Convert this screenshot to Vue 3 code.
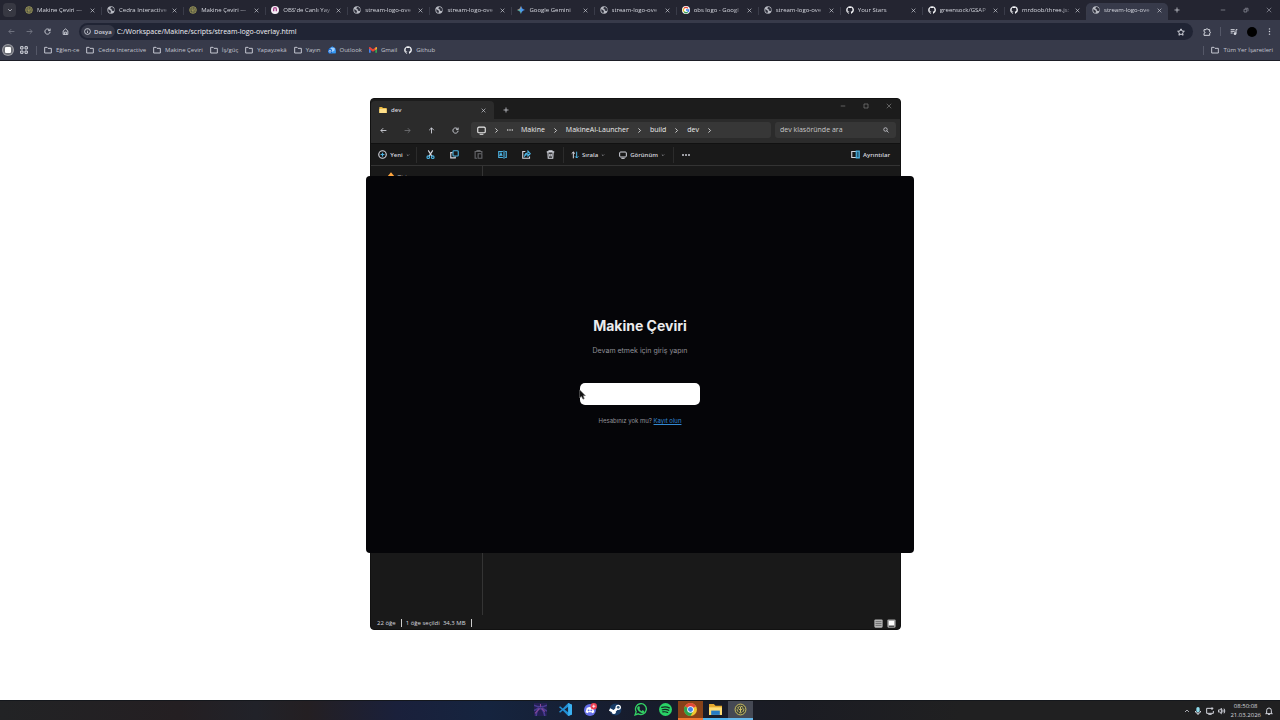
<script setup>
import { ref } from 'vue'

const url = ref('C:/Workspace/Makine/scripts/stream-logo-overlay.html')
const query = ref('')

const tabs = [
  { icon: 'makine', title: 'Makine Çeviri —' },
  { icon: 'globe', title: 'Cedra Interactive' },
  { icon: 'makine', title: 'Makine Çeviri —' },
  { icon: 'obs', title: "OBS'de Canlı Yay" },
  { icon: 'globe', title: 'stream-logo-ove' },
  { icon: 'globe', title: 'stream-logo-ove' },
  { icon: 'gemini', title: 'Google Gemini' },
  { icon: 'globe', title: 'stream-logo-ove' },
  { icon: 'google', title: 'obs logo - Googl' },
  { icon: 'globe', title: 'stream-logo-ove' },
  { icon: 'github', title: 'Your Stars' },
  { icon: 'github', title: 'greensock/GSAP' },
  { icon: 'github', title: 'mrdoob/three.js:' },
  { icon: 'globe', title: 'stream-logo-ove', active: true },
]

const bookmarks = [
  { icon: 'folder', title: 'Eğlen-ce' },
  { icon: 'folder', title: 'Cedra Interactive' },
  { icon: 'folder', title: 'Makine Çeviri' },
  { icon: 'folder', title: 'İş/güç' },
  { icon: 'folder', title: 'Yapayzekâ' },
  { icon: 'folder', title: 'Yayın' },
  { icon: 'outlook', title: 'Outlook' },
  { icon: 'gmail', title: 'Gmail' },
  { icon: 'github', title: 'Github' },
]

const crumbs = ['Makine', 'MakineAI-Launcher', 'build', 'dev']

const fileActions = [
  { icon: 'cut', label: 'Kes' },
  { icon: 'copy', label: 'Kopyala' },
  { icon: 'paste', label: 'Yapıştır', dim: true },
  { icon: 'rename', label: 'Yeniden adlandır' },
  { icon: 'share', label: 'Paylaş' },
  { icon: 'trash', label: 'Sil' },
]

const apps = [
  { icon: 'game', label: 'Oyun' },
  { icon: 'vscode', label: 'Visual Studio Code' },
  { icon: 'discord', label: 'Discord' },
  { icon: 'steam', label: 'Steam' },
  { icon: 'whatsapp', label: 'WhatsApp' },
  { icon: 'spotify', label: 'Spotify' },
  { icon: 'chrome', label: 'Chrome', state: 'alert' },
  { icon: 'explorer', label: 'Dosya Gezgini', state: 'open' },
  { icon: 'makine', label: 'Makine Çeviri', state: 'focused' },
]
</script>

<template>
  <div class="screen">
    <svg class="sprite" aria-hidden="true">
      <symbol id="chevron-down" viewBox="0 0 24 24"><path class="line" d="M5 9l7 7 7-7" /></symbol>
      <symbol id="chevron-up" viewBox="0 0 24 24"><path class="line" d="M4 16l8-8 8 8" /></symbol>
      <symbol id="chevron-right" viewBox="0 0 24 24"><path class="line bold" d="M7 2l10 10L7 22" /></symbol>
      <symbol id="close" viewBox="0 0 24 24"><path class="line" d="M3 3l18 18M21 3L3 21" /></symbol>
      <symbol id="plus" viewBox="0 0 24 24"><path class="line" d="M12 2v20M2 12h20" /></symbol>
      <symbol id="minus" viewBox="0 0 24 24"><path class="line" d="M3 12h18" /></symbol>
      <symbol id="maximize" viewBox="0 0 24 24"><path class="line" d="M4 4h16v16H4z" /></symbol>
      <symbol id="restore" viewBox="0 0 24 24"><path class="line" d="M4 9h11v11H4zM8 5h12v12" /></symbol>
      <symbol id="back" viewBox="0 0 24 24"><path class="line" d="M22 12H3M11 4l-8 8 8 8" /></symbol>
      <symbol id="forward" viewBox="0 0 24 24"><path class="line" d="M2 12h19M13 4l8 8-8 8" /></symbol>
      <symbol id="up" viewBox="0 0 24 24"><path class="line" d="M12 22V3M4 11l8-8 8 8" /></symbol>
      <symbol id="reload" viewBox="0 0 24 24"><path class="line" d="M20 8a9 9 0 1 0 1 5M21 2v7h-7" /></symbol>
      <symbol id="home" viewBox="0 0 24 24"><path class="line" d="M4 10l8-7 8 7v12H4zM9 22v-8h6v8" /></symbol>
      <symbol id="info" viewBox="0 0 24 24"><circle class="line" cx="12" cy="12" r="10" /><path class="line" d="M12 11v6M12 6v2" /></symbol>
      <symbol id="star" viewBox="0 0 24 24"><path class="line" d="M12 2.500l3 6.500 7 .8-5.200 4.800 1.400 7L12 18l-6.200 3.600 1.400-7L2 9.800 9 9z" /></symbol>
      <symbol id="puzzle" viewBox="0 0 24 24"><path class="line" d="M3 5h6c0-4 6-4 6 0h5v6c3 0 3 5 0 5v6H3v-6c4 0 4-5 0-5z" /></symbol>
      <symbol id="media" viewBox="0 0 24 24"><path class="line" d="M2 5h12M2 10h12M2 15h6M18 17V5h4" /><circle cx="15" cy="17" r="4" fill="currentColor" /></symbol>
      <symbol id="dots" viewBox="0 0 24 24"><g fill="currentColor"><circle cx="12" cy="3" r="2.500" /><circle cx="12" cy="12" r="2.500" /><circle cx="12" cy="21" r="2.500" /></g></symbol>
      <symbol id="more" viewBox="0 0 24 24"><g fill="currentColor"><circle cx="3" cy="12" r="2.800" /><circle cx="12" cy="12" r="2.800" /><circle cx="21" cy="12" r="2.800" /></g></symbol>
      <symbol id="folder" viewBox="0 0 24 24"><path class="line" d="M2 4h7l3 3h10v14H2z" /></symbol>
      <symbol id="grid" viewBox="0 0 24 24"><path class="line" d="M2 2h7v7H2zM15 2h7v7h-7zM2 15h7v7H2zM15 15h7v7h-7z" /></symbol>
      <symbol id="profile" viewBox="0 0 24 24"><circle cx="12" cy="12" r="12" fill="#9b9ca3" /><circle cx="12" cy="12" r="10" fill="#6c6e76" /><rect x="6" y="6" width="12" height="12" rx="2" fill="#fff" /></symbol>
      <symbol id="search" viewBox="0 0 24 24"><circle class="line" cx="10" cy="10" r="7" /><path class="line" d="M15 15l7 7" /></symbol>
      <symbol id="monitor" viewBox="0 0 24 24"><rect class="line" x="2" y="3" width="20" height="15" rx="3" /><path class="line" d="M7 22h10" /></symbol>
      <symbol id="globe" viewBox="0 0 24 24"><circle cx="12" cy="12" r="11" fill="#b9bbc3" /><path d="M3 10l6 2 3 4-2 6-5-4zM12 3l-2 5 4 2 1 4 6 1 1-6-5-5z" fill="#30323e" /></symbol>
      <symbol id="makine" viewBox="0 0 24 24"><circle cx="12" cy="12" r="11" fill="#41463c" /><g fill="none" stroke="#cfc168" stroke-width="1.800"><circle cx="12" cy="12" r="10" /><circle cx="12" cy="12" r="6" stroke-dasharray="5 2" /><path d="M12 7v10M8 10l4 4 4-4" /></g></symbol>
      <symbol id="obs" viewBox="0 0 24 24"><circle cx="12" cy="12" r="12" fill="#f4eef5" /><path d="M6 16V9a6 6 0 0 1 12 0v7h-4V9a2 2 0 0 0-4 0v7z" fill="#a9428c" /></symbol>
      <symbol id="gemini" viewBox="0 0 24 24"><path d="M12 0q2 10 12 12-10 2-12 12Q10 14 0 12 10 10 12 0z" fill="#4c8ee8" /><path d="M12 0q2 10 12 12H12z" fill="#4c8ee8" /><path d="M0 12h12v12Q10 14 0 12z" fill="#67bd74" /><path d="M0 12q10-2 12-12v12z" fill="#dba05a" /><circle cx="12" cy="12" r="5" fill="#4c9ee8" /></symbol>
      <symbol id="google" viewBox="0 0 24 24"><circle cx="12" cy="12" r="12" fill="#fff" /><g fill="none" stroke-width="4"><path d="M6 7a8 8 0 0 1 12 0" stroke="#e5483c" /><path d="M6 7a8 8 0 0 0 0 10" stroke="#efb72c" /><path d="M6 17a8 8 0 0 0 11 1" stroke="#38a157" /><path d="M12 12h8q0 4-3 6" stroke="#4187ee" /></g></symbol>
      <symbol id="github" viewBox="0 0 24 24"><path fill="#f3f4f7" d="M12 .5C5.700.5.500 5.700.500 12c0 5.100 3.300 9.400 7.900 10.900.600.100.800-.2.800-.6v-2.100c-3.200.7-3.900-1.400-3.900-1.400-.5-1.300-1.300-1.700-1.300-1.700-1-.7.100-.7.100-.7 1.200.1 1.800 1.200 1.800 1.200 1 1.800 2.700 1.300 3.400 1 .1-.7.400-1.300.7-1.600-2.600-.3-5.300-1.300-5.300-5.700 0-1.300.500-2.300 1.200-3.100-.1-.3-.5-1.500.1-3.100 0 0 1-.3 3.200 1.200a11 11 0 0 1 5.800 0c2.200-1.500 3.200-1.200 3.200-1.200.6 1.600.2 2.800.1 3.100.7.800 1.200 1.800 1.200 3.100 0 4.400-2.700 5.400-5.300 5.700.4.400.8 1.100.8 2.100v3.200c0 .3.200.7.800.6A11.500 11.500 0 0 0 12 .5z" /></symbol>
      <symbol id="outlook" viewBox="0 0 24 24"><path d="M3 8l10-7 10 7v14H3z" fill="#2d8df0" /><path d="M8 5h12v9l-6 4-6-4z" fill="#9fd0ff" /><path d="M3 11l11 7 9-7v11H3z" fill="#359af5" /><rect x="0" y="10" width="12" height="12" rx="2" fill="#1464c8" /><circle cx="6" cy="16" r="3" fill="none" stroke="#fff" stroke-width="2" /></symbol>
      <symbol id="gmail" viewBox="0 0 24 24"><path d="M0 5h5v15H0z" fill="#4285f4" /><path d="M19 5h5v15h-5z" fill="#34a853" /><path d="M0 4l3-1 9 7 9-7 3 1v4l-12 9L0 8z" fill="#e84335" /><path d="M19 5l5-1v5l-5 3z" fill="#f4ba31" /></symbol>
      <symbol id="folder-full" viewBox="0 0 24 24"><path d="M1 3h8l3 3h11v15H1z" fill="#e9b63b" /><path d="M1 8h22v13H1z" fill="#ffe08a" /></symbol>
      <symbol id="add-circle" viewBox="0 0 24 24"><circle class="line" cx="12" cy="12" r="10" /><path class="line blue" d="M12 7v10M7 12h10" /></symbol>
      <symbol id="cut" viewBox="0 0 24 24"><path class="line" d="M6 1l10 16M18 1L8 17" /><circle class="line blue" cx="6" cy="19" r="3.500" /><circle class="line blue" cx="18" cy="19" r="3.500" /></symbol>
      <symbol id="copy" viewBox="0 0 24 24"><path class="line" d="M7 7H2v14h12v-4" /><rect class="line blue" x="8" y="2" width="14" height="14" rx="2" /></symbol>
      <symbol id="paste" viewBox="0 0 24 24"><path class="line" d="M8 22H3V4h18v4M8 4V1h8v3M11 10h10v12H11z" /></symbol>
      <symbol id="rename" viewBox="0 0 24 24"><path class="line blue" d="M13 4H2v16h11M19 4h3v16h-3M16 1v22M5 16l3-8 3 8M6 13h4" /></symbol>
      <symbol id="share" viewBox="0 0 24 24"><path class="line" d="M9 4H2v18h18v-5" /><path class="line blue" d="M7 16q1-8 9-8V3l6 7-6 6v-4q-6 0-9 4z" /></symbol>
      <symbol id="trash" viewBox="0 0 24 24"><path class="line" d="M2 5h20M8 5V2h8v3M5 5l1 17h12l1-17M10 10v7M14 10v7" /></symbol>
      <symbol id="sort" viewBox="0 0 24 24"><path class="line" d="M7 22V3M2 8l5-5 5 5" /><path class="line blue" d="M17 2v19M12 16l5 5 5-5" /></symbol>
      <symbol id="details" viewBox="0 0 24 24"><path class="line" d="M13 4H2v16h11" /><path d="M14 3h8v18h-8z" fill="#275c78" /><path class="line blue" d="M14 3h8v18h-8z" /></symbol>
      <symbol id="list-view" viewBox="0 0 24 24"><rect x="1" y="1" width="22" height="22" rx="3" fill="#b5b5b5" /><path d="M4 7h16M4 12h16M4 17h16" stroke="#5c5c5c" stroke-width="2" /></symbol>
      <symbol id="large-view" viewBox="0 0 24 24"><rect x="1" y="1" width="22" height="22" rx="3" fill="#a5a5a5" /><rect x="5" y="5" width="14" height="11" fill="#fff" /><path d="M5 20h14" stroke="#333" stroke-width="2" /></symbol>
      <symbol id="gallery" viewBox="0 0 24 24"><path d="M12 1l10 12H2z" fill="#ffa63f" /><path d="M2 12h20v9H2z" fill="#4a79b5" /></symbol>

      <symbol id="game" viewBox="0 0 24 24"><path d="M0 0h24v24H0z" fill="#241f52" /><path d="M0 4q12 6 24 0M4 24q0-12 8-14 6 2 8 14M0 14l9-5M15 9l9 6" fill="none" stroke="#4a3c94" stroke-width="3" /><path d="M2 19l8-9M14 10l6 6M12 2v5" stroke="#8a4896" stroke-width="2" /></symbol>
      <symbol id="vscode" viewBox="0 0 24 24"><path d="M17 0l7 3v18l-7 3L7 14l-5 4-2-2 5-4-5-4 2-2 5 4z" fill="#228fd5" /><path d="M17 7v10l-7-5z" fill="#17283e" /><path d="M17 0l7 3v18l-7 3z" fill="#3bb1f1" /></symbol>
      <symbol id="discord" viewBox="0 0 24 24"><circle cx="11" cy="13" r="11" fill="#6570e8" /><path d="M5 9q6-3 12 0l2 8-4 2-1-2H8l-1 2-4-2z" fill="#fff" /><circle cx="8.500" cy="13.500" r="1.700" fill="#6570e8" /><circle cx="13.500" cy="13.500" r="1.700" fill="#6570e8" /><circle cx="18" cy="6" r="6" fill="#ef4052" /><path d="M15 6h6M18 3v6" stroke="#fff" stroke-width="1.500" /></symbol>
      <symbol id="steam" viewBox="0 0 24 24"><circle cx="12" cy="12" r="11" fill="#173b65" /><path d="M1 12l8 4 7-7" fill="none" stroke="#fff" stroke-width="5" /><circle cx="17" cy="8" r="5" fill="#fff" /><circle cx="17" cy="8" r="2.500" fill="#315575" /><circle cx="9" cy="17" r="3.500" fill="#fff" /></symbol>
      <symbol id="whatsapp" viewBox="0 0 24 24"><path d="M2 22l2-6a10 10 0 1 1 4 4z" fill="none" stroke="#33d164" stroke-width="2.500" /><path d="M8 6l2 0 1 3-1 2q1 3 4 4l2-2 3 2v2q-2 3-6 1-5-2-7-7-1-3 2-5z" fill="#33d164" /></symbol>
      <symbol id="spotify" viewBox="0 0 24 24"><circle cx="12" cy="12" r="12" fill="#29d366" /><path d="M5 8q8-2 14 1M6 12.500q7-2 12 1M7 16.500q5-1 9 1" fill="none" stroke="#142620" stroke-width="2.200" stroke-linecap="round" /></symbol>
      <symbol id="chrome" viewBox="0 0 24 24"><circle cx="12" cy="12" r="12" fill="#f3c62f" /><path d="M12 12L1.600 6a12 12 0 0 1 20.800 0z" fill="#e34a3b" /><path d="M12 12L1.600 6A12 12 0 0 0 12 24l5-9z" fill="#2da44f" /><circle cx="12" cy="12" r="6" fill="#fff" /><circle cx="12" cy="12" r="4.600" fill="#3f83ea" /></symbol>
      <symbol id="explorer" viewBox="0 0 24 24"><path d="M0 2h9l3 3h12v17H0z" fill="#e5a92f" /><path d="M0 8h24v14H0z" fill="#ffdd73" /><path d="M4 14h16v8H4z" fill="#267cc5" /></symbol>

      <symbol id="mic" viewBox="0 0 24 24"><rect x="7" y="0" width="10" height="16" rx="5" fill="#8fdced" /><path class="line" d="M4 12q0 7 8 7t8-7M12 19v5" /></symbol>
      <symbol id="network" viewBox="0 0 24 24"><path class="line" d="M15 4H2v15h20v-7M7 23h10M18 1v8M15 4h7" /></symbol>
      <symbol id="sound" viewBox="0 0 24 24"><path class="line" d="M1 9h4l5-5v16l-5-5H1zM14 8q3 4 0 8M18 5q5 7 0 14" /></symbol>
      <symbol id="bell" viewBox="0 0 24 24"><path class="line" d="M5 18v-8a7 7 0 0 1 14 0v8l3 2H2zM9 23h6" /></symbol>
    </svg>

    <header class="browser">
      <div class="tabstrip">
        <button class="tab-search" aria-label="Sekmelerde ara"><svg class="i6"><use href="#chevron-down" /></svg></button>
        <nav class="tabs" aria-label="Sekmeler">
          <div v-for="(tab, i) in tabs" :key="i" class="tab" :class="{ active: tab.active }">
            <svg class="i8"><use :href="'#' + tab.icon" /></svg>
            <span class="tab-title">{{ tab.title }}</span>
            <button class="tab-close" aria-label="Sekmeyi kapat"><svg class="i5"><use href="#close" /></svg></button>
          </div>
        </nav>
        <button class="new-tab" aria-label="Yeni sekme"><svg class="i6"><use href="#plus" /></svg></button>
        <div class="window-controls">
          <button aria-label="Küçült"><svg class="i6"><use href="#minus" /></svg></button>
          <button aria-label="Geri yükle"><svg class="i6"><use href="#restore" /></svg></button>
          <button aria-label="Kapat"><svg class="i6"><use href="#close" /></svg></button>
        </div>
      </div>

      <div class="toolbar">
        <div class="nav-buttons">
          <button class="faded" aria-label="Geri"><svg class="i7"><use href="#back" /></svg></button>
          <button class="faded" aria-label="İleri"><svg class="i7"><use href="#forward" /></svg></button>
          <button aria-label="Yenile"><svg class="i7"><use href="#reload" /></svg></button>
          <button aria-label="Ana sayfa"><svg class="i7"><use href="#home" /></svg></button>
        </div>
        <div class="omnibox">
          <button class="scheme"><svg class="i7"><use href="#info" /></svg>Dosya</button>
          <input v-model="url" class="url" type="text" aria-label="Adres" spellcheck="false" />
          <button aria-label="Yer işareti ekle"><svg class="i8"><use href="#star" /></svg></button>
        </div>
        <div class="toolbar-end">
          <button aria-label="Uzantılar"><svg class="i8"><use href="#puzzle" /></svg></button>
          <span class="rule"></span>
          <button aria-label="Medya"><svg class="i8"><use href="#media" /></svg></button>
          <button class="avatar" aria-label="Profil"></button>
          <button aria-label="Menü"><svg class="i7"><use href="#dots" /></svg></button>
        </div>
      </div>

      <nav class="bookmarks" aria-label="Yer işaretleri">
        <button aria-label="Profil"><svg class="i12"><use href="#profile" /></svg></button>
        <button class="grid-button" aria-label="Sekme grupları"><svg class="i8"><use href="#grid" /></svg></button>
        <span class="rule"></span>
        <a v-for="b in bookmarks" :key="b.title" href="#" class="bookmark"><svg class="i8"><use :href="'#' + b.icon" /></svg>{{ b.title }}</a>
        <span class="spacer"></span>
        <span class="rule"></span>
        <a href="#" class="bookmark"><svg class="i8"><use href="#folder" /></svg>Tüm Yer İşaretleri</a>
      </nav>
    </header>

    <main class="desktop">
      <section class="explorer" aria-label="dev">
        <div class="ex-title">
          <div class="ex-tab">
            <svg class="i8"><use href="#folder-full" /></svg>
            <span class="ex-name">dev</span>
            <button aria-label="Sekmeyi kapat"><svg class="i5"><use href="#close" /></svg></button>
          </div>
          <button class="ex-new" aria-label="Yeni sekme"><svg class="i6"><use href="#plus" /></svg></button>
          <div class="ex-controls">
            <button aria-label="Küçült"><svg class="i6"><use href="#minus" /></svg></button>
            <button aria-label="Büyüt"><svg class="i6"><use href="#maximize" /></svg></button>
            <button aria-label="Kapat"><svg class="i6"><use href="#close" /></svg></button>
          </div>
        </div>
        <div class="ex-nav">
          <div class="ex-arrows">
            <button aria-label="Geri"><svg class="i7"><use href="#back" /></svg></button>
            <button class="faded" aria-label="İleri"><svg class="i7"><use href="#forward" /></svg></button>
            <button aria-label="Yukarı"><svg class="i7"><use href="#up" /></svg></button>
            <button aria-label="Yenile"><svg class="i7"><use href="#reload" /></svg></button>
          </div>
          <div class="crumbs">
            <svg class="i9"><use href="#monitor" /></svg>
            <svg class="i5"><use href="#chevron-right" /></svg>
            <svg class="i6"><use href="#more" /></svg>
            <template v-for="c in crumbs" :key="c">
              <button>{{ c }}</button>
              <svg class="i5"><use href="#chevron-right" /></svg>
            </template>
          </div>
          <label class="ex-search">
            <input v-model="query" type="text" placeholder="dev klasöründe ara" aria-label="dev klasöründe ara" />
            <svg class="i6"><use href="#search" /></svg>
          </label>
        </div>
        <div class="ex-tools">
          <button class="tool first"><svg class="i9"><use href="#add-circle" /></svg>Yeni<svg class="i4"><use href="#chevron-down" /></svg></button>
          <div class="ex-actions">
            <button v-for="a in fileActions" :key="a.icon" :class="{ faded: a.dim }" :aria-label="a.label"><svg class="i9"><use :href="'#' + a.icon" /></svg></button>
          </div>
          <button class="tool"><svg class="i8"><use href="#sort" /></svg>Sırala<svg class="i4"><use href="#chevron-down" /></svg></button>
          <button class="tool view"><svg class="i8"><use href="#monitor" /></svg>Görünüm<svg class="i4"><use href="#chevron-down" /></svg></button>
          <button class="ex-more" aria-label="Diğer"><svg class="i8"><use href="#more" /></svg></button>
          <span class="spacer"></span>
          <button class="tool"><svg class="i9"><use href="#details" /></svg>Ayrıntılar</button>
        </div>
        <div class="ex-body">
          <aside><svg class="i8"><use href="#gallery" /></svg>Giriş</aside>
        </div>
        <footer class="ex-status">
          <span>22 öğe</span>
          <span>1 öğe seçildi&nbsp; 34,3 MB</span>
          <span class="spacer"></span>
          <button aria-label="Ayrıntı görünümü"><svg class="i9"><use href="#list-view" /></svg></button>
          <button aria-label="Büyük simgeler"><svg class="i9"><use href="#large-view" /></svg></button>
        </footer>
      </section>

      <section class="login">
        <h1>Makine Çeviri</h1>
        <p class="lead">Devam etmek için giriş yapın</p>
        <button class="submit" aria-label="Giriş yap"></button>
        <p class="signup">Hesabınız yok mu? <a href="#">Kayıt olun</a></p>
        <svg class="cursor" viewBox="0 0 12 18"><path d="M1 1v14l3-3 3 5 2-1-2-5h4z" fill="#111" stroke="#777" /></svg>
      </section>
    </main>

    <footer class="taskbar">
      <nav class="apps" aria-label="Uygulamalar">
        <button v-for="a in apps" :key="a.icon" class="app" :class="a.state" :aria-label="a.label"><svg class="i13"><use :href="'#' + a.icon" /></svg></button>
      </nav>
      <div class="tray">
        <button aria-label="Gizli simgeler"><svg class="i6"><use href="#chevron-up" /></svg></button>
        <button aria-label="Mikrofon"><svg class="i8"><use href="#mic" /></svg></button>
        <button aria-label="Ağ"><svg class="i8"><use href="#network" /></svg></button>
        <button aria-label="Ses"><svg class="i8"><use href="#sound" /></svg></button>
        <time class="clock"><span>08:50:08</span><span>21.03.2026</span></time>
        <button aria-label="Bildirimler"><svg class="i8"><use href="#bell" /></svg></button>
      </div>
    </footer>
  </div>
</template>

<style>
body {
  margin: 0;
  background: #fff;
}
</style>

<style scoped>
.screen {
  display: flex;
  flex-direction: column;
  height: 100vh;
  overflow: hidden;
  font-family: "Open Sans", "Noto Sans", sans-serif;
  font-size: 7px;
  line-height: 10px;
  color: #d5d7df;
}
.screen * { box-sizing: border-box; }
.sprite { position: absolute; width: 0; height: 0; }
.line {
  fill: none;
  stroke: currentColor;
  stroke-width: 3;
}
.bold { stroke-width: 4; }
.blue { stroke: #4cb4e4; }
button {
  display: flex;
  align-items: center;
  justify-content: center;
  padding: 0;
  border: 0;
  background: none;
  color: inherit;
  font: inherit;
  white-space: nowrap;
}
input {
  min-width: 0;
  padding: 0;
  border: 0;
  outline: 0;
  background: none;
  color: inherit;
  font: inherit;
}
svg { flex: none; display: block; }
.i4 { width: 4px; height: 4px; }
.i5 { width: 5px; height: 5px; }
.i6 { width: 6px; height: 6px; }
.i7 { width: 7px; height: 7px; }
.i8 { width: 8px; height: 8px; }
.i9 { width: 9px; height: 9px; }
.i12 { width: 12px; height: 12px; }
.i13 { width: 13px; height: 13px; }
.spacer { flex: 1; }
.faded { opacity: 0.4; }
.rule { width: 1px; height: 9px; background: #555868; }

/* Browser chrome */
.browser {
  flex: none;
  background: #373a4a;
  border-bottom: 1px solid #1d1e27;
}
.tabstrip {
  display: flex;
  height: 20px;
  background: #242531;
}
.tab-search {
  width: 13px;
  height: 14px;
  margin: 3px 3px 0;
  border-radius: 4px;
  background: #373842;
}
.tabs { display: flex; flex: 1; min-width: 0; }
.tab {
  position: relative;
  display: flex;
  flex: 1;
  align-items: center;
  min-width: 0;
  margin-top: 3px;
  padding: 0 6px 3px;
  gap: 4px;
  font-size: 6px;
}
.tab + .tab::before {
  content: "";
  position: absolute;
  left: 0;
  top: 4px;
  width: 1px;
  height: 8px;
  background: #3a3c49;
}
.tab.active {
  border-radius: 5px 5px 0 0;
  background: #373a4a;
}
.tab-title {
  flex: 1;
  white-space: nowrap;
  mask-image: linear-gradient(90deg, #000 80%, rgba(0, 0, 0, 0.2));
}
.new-tab { width: 18px; height: 20px; }
.window-controls { display: flex; width: 94px; padding-left: 25px; color: #8c8e99; }
.window-controls button { flex: 1; height: 20px; }
.toolbar {
  display: flex;
  align-items: center;
  height: 23px;
}
.nav-buttons { display: flex; width: 79px; padding-left: 2px; }
.nav-buttons button { width: 18px; height: 17px; }
.omnibox {
  display: flex;
  flex: 1;
  align-items: center;
  height: 17px;
  padding: 0 8px 0 2px;
  border-radius: 9px;
  background: #202434;
}
.scheme {
  height: 13px;
  padding: 0 3px;
  gap: 3px;
  border-radius: 7px;
  background: #353847;
  font-size: 6px;
  font-weight: 600;
}
.url { flex: 1; margin-left: 2px; color: #f0f1f6; }
.toolbar-end {
  display: flex;
  align-items: center;
  justify-content: space-between;
  width: 87px;
  padding: 0 7px 0 10px;
}
.avatar { width: 10px; height: 10px; border-radius: 50%; background: #000; }
.bookmarks {
  display: flex;
  align-items: center;
  height: 17px;
  padding: 0 7px 3px 2px;
  font-size: 6px;
}
.grid-button { margin: 0 8px 0 6px; }
.bookmark {
  display: flex;
  align-items: center;
  gap: 4px;
  margin-left: 7px;
  color: #c3c5cf;
  text-decoration: none;
  white-space: nowrap;
}

/* Desktop and windows */
.desktop {
  position: relative;
  flex: 1;
  background: #fff;
}
.explorer {
  position: absolute;
  left: calc(50% - 270px);
  top: 37px;
  display: flex;
  flex-direction: column;
  width: 531px;
  height: 532px;
  border: 1px solid #111;
  border-radius: 4px;
  background: #191919;
  overflow: hidden;
}
.ex-title { display: flex; height: 20px; background: #1c1c1c; }
.ex-tab {
  display: flex;
  align-items: center;
  width: 123px;
  margin-top: 2px;
  padding: 0 8px;
  gap: 4px;
  border-radius: 4px 4px 0 0;
  background: #2b2b2b;
}
.ex-name { flex: 1; font-weight: 600; font-size: 6px; }
.ex-new { width: 23px; padding-top: 2px; }
.ex-controls { display: flex; margin-left: auto; color: #777; }
.ex-controls button { width: 23px; height: 14px; }
.ex-nav {
  display: flex;
  align-items: center;
  height: 24px;
  padding: 0 4px 2px 0;
  background: #2b2b2b;
}
.ex-arrows { display: flex; width: 100px; }
.ex-arrows button { width: 24px; height: 16px; }
.crumbs {
  display: flex;
  flex: 1;
  align-items: center;
  height: 16px;
  padding-left: 6px;
  gap: 8px;
  border-radius: 3px;
  background: #373737;
  color: #ececec;
}
.ex-search {
  display: flex;
  align-items: center;
  width: 121px;
  height: 16px;
  margin-left: 4px;
  padding: 0 7px 0 5px;
  border-radius: 3px;
  background: #373737;
}
.ex-search input { flex: 1; }
.ex-search input::placeholder { color: #c8c8c8; opacity: 1; }
.ex-tools {
  display: flex;
  align-items: center;
  height: 23px;
  padding: 0 10px 0 7px;
  border-top: 1px solid #111;
  border-bottom: 1px solid #333;
  font-size: 6px;
}
.tool { gap: 3px; font-weight: 600; }
.tool.first { width: 32px; }
.tool.view { margin-left: 14px; }
.ex-actions {
  display: flex;
  margin: 0 7px 0 6px;
  padding: 0 1px;
  border: solid #2b2b2b;
  border-width: 0 1px;
}
.ex-actions button { width: 24px; height: 16px; }
.ex-more {
  height: 16px;
  margin-left: 8px;
  padding-left: 8px;
  border-left: 1px solid #2b2b2b;
}
.ex-body { display: flex; flex: 1; }
.ex-body aside {
  display: flex;
  align-items: flex-start;
  gap: 2px;
  width: 112px;
  padding: 6px 0 0 16px;
  border-right: 1px solid #343434;
  font-size: 6px;
}
.ex-status {
  display: flex;
  align-items: center;
  height: 14px;
  padding: 2px 4px 0 6px;
  gap: 4px;
  font-size: 6px;
}
.ex-status span:not(.spacer) {
  padding-right: 5px;
  border-right: 1px solid #ccc;
  line-height: 8px;
}
.login {
  position: absolute;
  left: calc(50% - 274px);
  top: 115px;
  display: flex;
  flex-direction: column;
  align-items: center;
  width: 548px;
  height: 377px;
  padding-top: 139px;
  border-radius: 4px;
  background: #050508;
  font-family: Inter, sans-serif;
}
.login h1 {
  margin: 0;
  font-size: 14px;
  font-weight: 700;
  line-height: 22px;
  color: #ececee;
}
.lead { margin: 9px 0 27px; font-size: 7px; line-height: 10px; color: #929298; }
.submit { width: 120px; height: 22px; border-radius: 5px; background: #fff; }
.signup { margin: 11px 0 0; font-size: 6px; line-height: 10px; color: #929298; }
.signup a { color: #3389d2; }
.cursor { position: absolute; left: 213px; top: 213px; width: 7px; height: 11px; }

/* Taskbar */
.taskbar {
  display: grid;
  grid-template-columns: 1fr auto 1fr;
  flex: none;
  height: 20px;
  border-top: 1px solid #14171c;
  background: linear-gradient(90deg, #222325 0, #241f22 14%, #212229 20%, #241f22 24%, #1a203b 31%, #15243f 38%, #171c2c 50%, #1b1c23 62%, #202021 75%);
}
.apps { grid-column: 2; display: flex; }
.app { width: 25px; border-bottom: 2px solid transparent; }
.app.alert { background: #884219; border-color: #ee7630; }
.app.open { border-color: #52b5ee; }
.app.focused { background: #454954; border-color: #65b8eb; }
.tray {
  display: flex;
  align-items: center;
  justify-content: flex-end;
  gap: 4px;
  padding-right: 7px;
}
.clock {
  display: flex;
  flex-direction: column;
  align-items: center;
  font-size: 6px;
  line-height: 9px;
}
</style>
